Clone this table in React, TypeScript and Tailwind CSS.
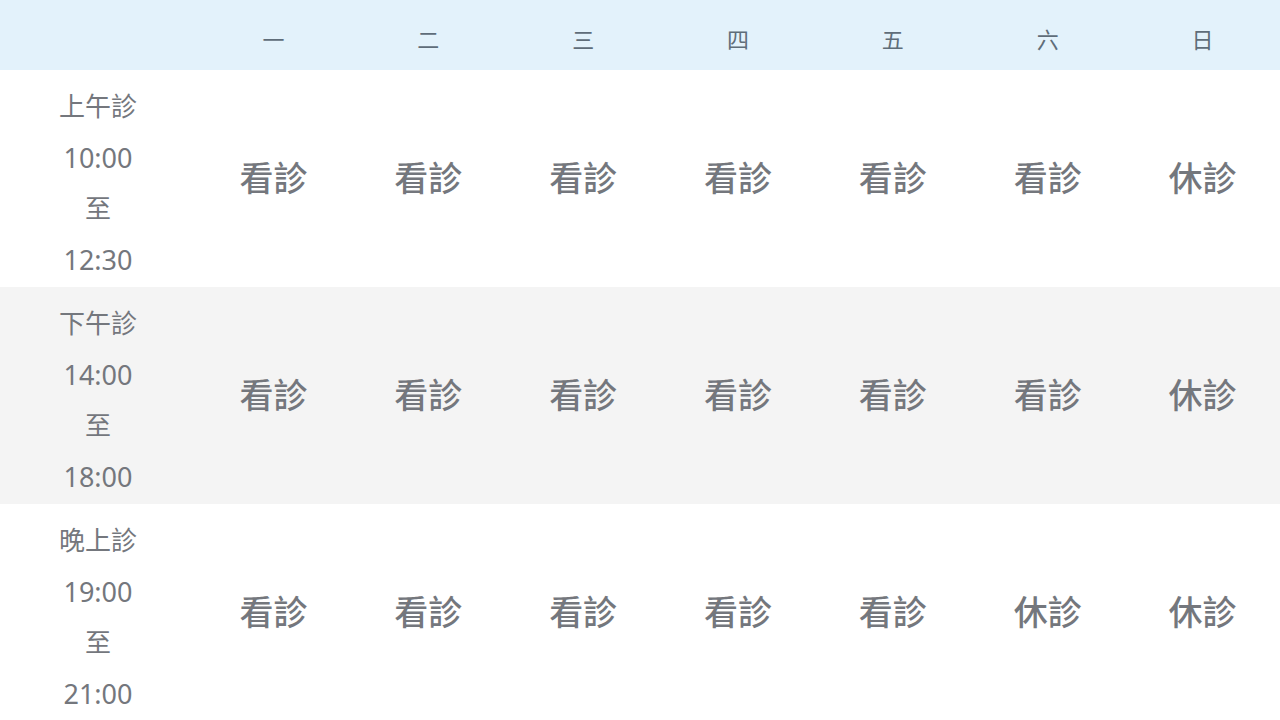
const days = ['一', '二', '三', '四', '五', '六', '日'];

const sessions = [
  { name: '上午診', from: '10:00', to: '12:30', status: ['看診', '看診', '看診', '看診', '看診', '看診', '休診'] },
  { name: '下午診', from: '14:00', to: '18:00', status: ['看診', '看診', '看診', '看診', '看診', '看診', '休診'] },
  { name: '晚上診', from: '19:00', to: '21:00', status: ['看診', '看診', '看診', '看診', '看診', '休診', '休診'] },
];

export default function App() {
  return (
    <div
      className="w-[1280px] bg-white text-[#74777d]"
      style={{ fontFamily: '"Noto Sans", "Noto Sans CJK TC", sans-serif' }}
    >
      {/* header */}
      <div className="grid h-[70px] grid-cols-[196px_repeat(7,1fr)] items-center bg-[#e3f2fb] text-[22px] text-[#5f6d79]">
        <div />
        {days.map((d) => (
          <div key={d} className="pt-[8px] text-center">
            {d}
          </div>
        ))}
      </div>

      {sessions.map((s, i) => (
        <div
          key={s.name}
          className={
            'grid h-[217px] grid-cols-[196px_repeat(7,1fr)] items-center ' +
            (i === 1 ? 'bg-[#f4f4f4]' : 'bg-white')
          }
        >
          <div className="flex flex-col items-center pt-[9px] text-[26px] leading-[51px]">
            <span>{s.name}</span>
            <span className="text-[27px]">{s.from}</span>
            <span>至</span>
            <span className="text-[27px]">{s.to}</span>
          </div>
          {s.status.map((st, j) => (
            <div key={j} className="text-center text-[34px] font-medium">
              {st}
            </div>
          ))}
        </div>
      ))}
    </div>
  );
}
